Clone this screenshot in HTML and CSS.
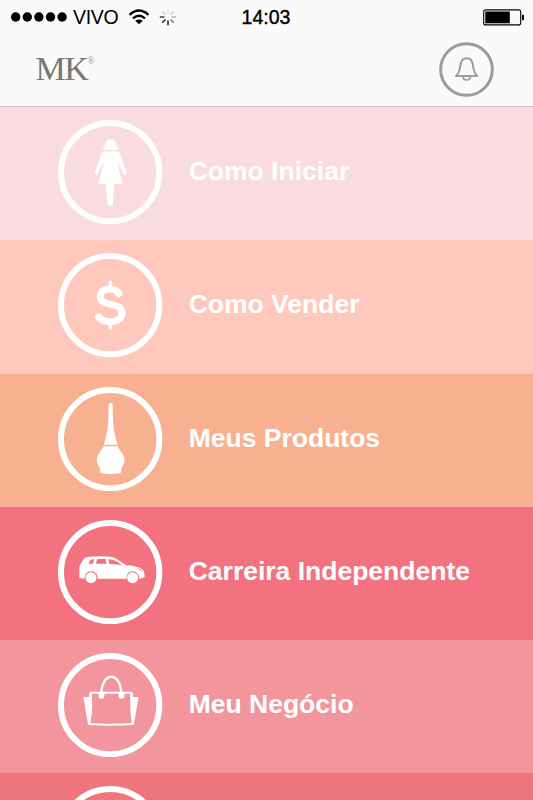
FILE: index.html
```html
<!DOCTYPE html>
<html lang="pt-BR">
<head>
    <meta charset="UTF-8">
    <title>MK</title>
    <link rel="stylesheet" href="styles.css">
</head>
<body>
    <header>
        <div class="status">
            <div class="carrier">
                <svg class="signal" width="56" height="10" viewBox="0 0 56 10">
                    <circle cx="4.7" cy="5" r="4.7"/>
                    <circle cx="16.3" cy="5" r="4.7"/>
                    <circle cx="27.9" cy="5" r="4.7"/>
                    <circle cx="39.5" cy="5" r="4.7"/>
                    <circle cx="51.1" cy="5" r="4.7"/>
                </svg>
                <span class="vivo">VIVO</span>
                <svg class="wifi" width="22" height="16" viewBox="0 0 22 16">
                    <path d="M1.5 5.8Q11 -2.8 20.5 5.8M5 9.4Q11 4.2 17 9.4" fill="none" stroke="#000" stroke-width="2.3"/>
                    <path d="M7.2 11.8Q11 9.3 14.8 11.8L11 15.2Z"/>
                </svg>
                <svg class="loading" width="18" height="18" viewBox="-9 -9 18 18">
                    <g stroke-width="1.4">
                        <path d="M0 -3.5V-8.2" stroke="#ddd"/>
                        <path d="M2.5 -2.5L5.8 -5.8" stroke="#ccc"/>
                        <path d="M3.5 0H8.2" stroke="#aaa"/>
                        <path d="M2.5 2.5L5.8 5.8" stroke="#777"/>
                        <path d="M0 3.5V8.2" stroke="#000"/>
                        <path d="M-2.5 2.5L-5.8 5.8" stroke="#222"/>
                        <path d="M-3.5 0H-8.2" stroke="#333"/>
                        <path d="M-2.5 -2.5L-5.8 -5.8" stroke="#ccc"/>
                    </g>
                </svg>
            </div>
            <span class="time">14:03</span>
            <svg class="battery" width="42" height="17" viewBox="0 0 42 17">
                <rect x="0.7" y="0.9" width="37" height="15" rx="2" fill="none" stroke="#000" stroke-width="1.1"/>
                <rect x="2.3" y="2.5" width="24.5" height="11.8"/>
                <path d="M39 5.7h1q1 0 1 1v3.6q0 1-1 1h-1z"/>
            </svg>
        </div>
        <div class="bar">
            <div class="logo">MK<sup>®</sup></div>
            <svg class="bell" width="55" height="55" viewBox="27 126 165 165" fill="none" stroke="#9c9c9c">
                <circle cx="109.5" cy="208.5" r="77.5" stroke-width="9"/>
                <path d="M78 228Q87 220 89 208L92 192Q95 175 110 175Q125 175 128 192L131 208Q133 220 142 228Z" stroke-width="6" stroke-linejoin="round"/>
                <path d="M99 229Q99 240 110 240Q121 240 121 229" stroke-width="5"/>
            </svg>
        </div>
    </header>

    <nav>
        <a class="item iniciar">
            <svg viewBox="25 15 313 313">
                <circle class="ring" cx="181.5" cy="171.5" r="147.5"/>
                <path d="M158 101Q165 96 167 86Q170 73 183 73Q196 73 199 86Q201 96 208 101Q203 106 190 105H177Q164 106 158 101Z"/>
                <path d="M164 109H202Q209 110 212 119L231 174Q231 180 223 180L206 144L205 150L219 206H194L189 271H174L167 206H146L161 150L160 144L144 178Q137 182 135 174L154 119Q157 110 164 109Z"/>
            </svg>
            <span>Como Iniciar</span>
        </a>
        <a class="item vender">
            <svg viewBox="25 25 313 313">
                <circle class="ring" cx="181.5" cy="181.5" r="147.5"/>
                <path class="line" d="M208 147C201 136 190 133 180 133C163 133 152 142 152 156C152 188 217 170 217 204C217 221 203 231 184 231C168 231 155 227 147 217" stroke-width="21"/>
                <path class="line" d="M182 113V130M182 235V250" stroke-width="11"/>
            </svg>
            <span>Como Vender</span>
        </a>
        <a class="item produtos">
            <svg viewBox="25 21 313 313">
                <circle class="ring" cx="181.5" cy="177.5" r="147.5"/>
                <path d="M177 72Q177 69 183 69Q189 69 189 72L190 120Q192 160 204 194H162Q174 160 176 120Z"/>
                <path d="M162 199H204Q207 207 216 217Q226 229 225 241Q224 251 214 268L215 277Q210 282 183 282Q156 282 150 277L152 268Q142 251 141 241Q140 229 150 217Q159 207 162 199Z"/>
            </svg>
            <span>Meus Produtos</span>
        </a>
        <a class="item carreira">
            <svg viewBox="25 14 313 313">
                <circle class="ring" cx="181.5" cy="170.5" r="147.5"/>
                <path fill-rule="evenodd" d="M89 187V157Q91 145 105 128Q112 123 150 123Q187 123 200 130L230 150Q260 151 278 162Q285 168 285 186L270 191Q266 168 249 168Q231 168 230 190H145Q143 168 124 168Q106 168 104 190ZM117 145H130L134 132H127Q119 135 117 145ZM138 145H171L168 131H143ZM179 146L216 149Q203 135 176 131Z"/>
                <circle cx="124" cy="187" r="16.5"/>
                <circle cx="249" cy="187" r="16.5"/>
                <path class="light" d="M267 160L278 168"/>
            </svg>
            <span>Carreira Independente</span>
        </a>
        <a class="item negocio">
            <svg viewBox="25 27 313 313">
                <circle class="ring" cx="181.5" cy="183.5" r="147.5"/>
                <path d="M101 159H119V146H126V200L121 243L115 240ZM267 159H249V146H242V200L247 243L253 240Z"/>
                <path class="line" d="M123 146H245L249 240Q183 244 119 240L125 190Z" stroke-width="6"/>
                <path class="line" d="M155 153C155 80 215 80 215 153" stroke-width="7"/>
                <path d="M147 145H164V159Q163 164 155 164Q147 164 147 159ZM207 145H224V159Q223 164 215 164Q207 164 207 159Z"/>
            </svg>
            <span>Meu Negócio</span>
        </a>
        <a class="item ultimo">
            <svg viewBox="25 15 313 313">
                <circle class="ring" cx="181.5" cy="171.5" r="147.5"/>
            </svg>
        </a>
    </nav>
</body>
</html>
```
FILE: styles.css
```css
* {
    box-sizing: border-box;
}

body {
    margin: 0;
    background-color: #fafafa;
    font-family: "Liberation Sans", Arial, sans-serif;
}

header {
    height: 107px;
    border-bottom: 1px solid #d4bfc1;
}

.status {
    display: grid;
    grid-template-columns: 1fr auto 1fr;
    align-items: center;
    height: 34px;
    padding: 0 8px 0 11px;
}

.carrier {
    display: flex;
    align-items: center;
}

.vivo {
    margin-left: 6px;
    font-size: 19.5px;
    letter-spacing: -0.3px;
}

.wifi {
    margin-left: 10px;
}

.loading {
    margin-left: 9px;
}

.time {
    margin-right: 4px;
    font-size: 19.5px;
    -webkit-text-stroke: 0.4px #000;
}

.battery {
    justify-self: end;
}

.bar {
    display: flex;
    justify-content: space-between;
    align-items: center;
    height: 72px;
    padding: 0 39px 2px 35.5px;
}

.logo {
    display: flex;
    color: #777;
    font-family: "Liberation Serif", "Times New Roman", serif;
    font-size: 34px;
    line-height: 36px;
    letter-spacing: -1.5px;
}

.logo sup {
    font-size: 10px;
    line-height: 20px;
    letter-spacing: 0;
    color: #999;
}

nav {
    height: 693px;
    overflow: hidden;
}

.item {
    display: flex;
    align-items: center;
    height: 133.3px;
    padding: 0 0 3px 58.4px;
    color: #fff;
    font-size: 26.5px;
    font-weight: bold;
}

.item svg {
    width: 104.3px;
    height: 104.3px;
    margin-right: 26px;
    fill: #fff;
}

.item span {
    padding-bottom: 1px;
}

.item .ring {
    fill: none;
    stroke: #fff;
    stroke-width: 18;
}

.item .line {
    fill: none;
    stroke: #fff;
    stroke-linecap: round;
    stroke-linejoin: round;
}

.item .light {
    stroke: #f2737f;
    stroke-width: 3;
}

.iniciar {
    background-color: #fadce0;
}

.vender {
    background-color: #ffc8bc;
}

.produtos {
    background-color: #f7b191;
}

.carreira {
    background-color: #f2737f;
}

.negocio {
    background-color: #f2959d;
}

.ultimo {
    background-color: #ee777f;
}
```
